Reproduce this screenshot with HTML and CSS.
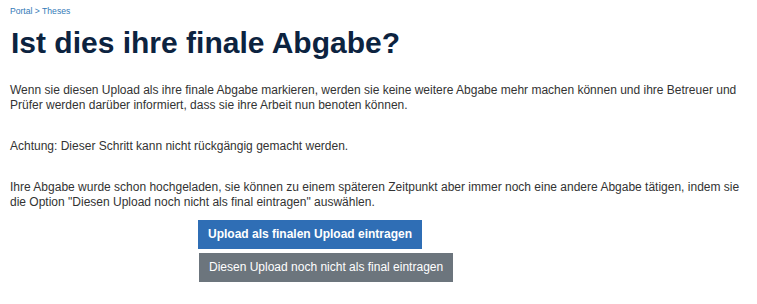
FILE: index.html
```html
<!DOCTYPE html>
<html lang="de">
<head>
<meta charset="utf-8">
<link rel="stylesheet" href="styles.css">
</head>
<body>
<div class="page">
  <nav class="crumbs"><a href="#">Portal</a> &gt; <a href="#">Theses</a></nav>
  <h1 class="title">Ist dies ihre finale Abgabe?</h1>
  <p class="text">Wenn sie diesen Upload als ihre finale Abgabe markieren, werden sie keine weitere Abgabe mehr machen können und ihre Betreuer und Prüfer werden darüber informiert, dass sie ihre Arbeit nun benoten können.</p>
  <p class="text">Achtung: Dieser Schritt kann nicht rückgängig gemacht werden.</p>
  <p class="text text-last">Ihre Abgabe wurde schon hochgeladen, sie können zu einem späteren Zeitpunkt aber immer noch eine andere Abgabe tätigen, indem sie die Option "Diesen Upload noch nicht als final eintragen" auswählen.</p>
  <div class="actions">
    <button class="btn btn-primary">Upload als finalen Upload eintragen</button>
    <button class="btn btn-secondary">Diesen Upload noch nicht als final eintragen</button>
  </div>
</div>
</body>
</html>
```
FILE: styles.css
```css
html, body {
  margin: 0;
  padding: 0;
  background: #ffffff;
}
body {
  font-family: "Liberation Sans", Arial, sans-serif;
  color: #333333;
}
.page {
  padding: 6px 10px 0 10px;
}
.crumbs {
  font-size: 8.6px;
  line-height: 11px;
  color: #337ab7;
}
.crumbs a {
  color: #337ab7;
  text-decoration: none;
}
.title {
  margin: 9px 0 23px 1px;
  font-size: 30px;
  line-height: 34px;
  font-weight: bold;
  color: #0c2340;
}
.text {
  margin: 0 0 26px 0;
  font-size: 12px;
  line-height: 15px;
}
.text-last {
  margin-bottom: 10px;
}
.actions {
  display: flex;
  flex-direction: column;
  align-items: flex-start;
  gap: 4px;
  margin-left: 188px;
}
.btn {
  font-family: "Liberation Sans", Arial, sans-serif;
  font-size: 12px;
  line-height: 15px;
  border: 1px solid transparent;
  padding: 6px 9px;
  border-radius: 0;
  cursor: pointer;
}
.btn-primary {
  background: #2f6eb5;
  color: #ffffff;
  font-weight: bold;
  border-color: #2f6eb5;
}
.btn-secondary {
  margin-left: 1px;
  background: #6c757d;
  color: #ffffff;
  border-color: #6c757d;
}
```
